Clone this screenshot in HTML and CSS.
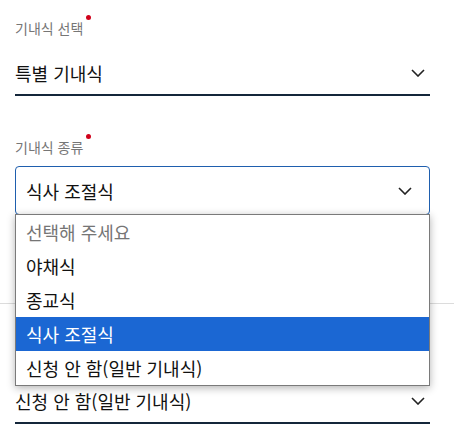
FILE: index.html
```html
<!DOCTYPE html>
<html lang="ko">
<head>
  <meta charset="UTF-8" />
  <title>기내식 신청</title>
  <link rel="stylesheet" href="styles.css">
</head>
<body>

  <div class="meal-form">
    <div class="field first">
      <div class="label">기내식 선택<span class="req"></span></div>
      <div class="select line">
        <span>특별 기내식</span>
        <svg class="chevron" width="14" height="8" viewBox="0 0 14 8"><path d="M1 1 L7 7 L13 1" /></svg>
      </div>
    </div>

    <div class="field second">
      <div class="label">기내식 종류<span class="req"></span></div>
      <div class="select box">
        <span>식사 조절식</span>
        <svg class="chevron" width="14" height="8" viewBox="0 0 14 8"><path d="M1 1 L7 7 L13 1" /></svg>
      </div>
      <ul class="options">
        <li class="placeholder">선택해 주세요</li>
        <li>야채식</li>
        <li>종교식</li>
        <li class="active">식사 조절식</li>
        <li>신청 안 함(일반 기내식)</li>
      </ul>
    </div>

    <div class="divider"></div>

    <div class="field third">
      <div class="label">유아 기내식<span class="req"></span></div>
      <div class="select line">
        <span>신청 안 함(일반 기내식)</span>
        <svg class="chevron" width="14" height="8" viewBox="0 0 14 8"><path d="M1 1 L7 7 L13 1" /></svg>
      </div>
    </div>
  </div>

</body>
</html>
```

FILE: styles.css
```css
body {
  margin: 0;
  font-family: "Noto Sans CJK KR", "Noto Sans", sans-serif;
  color: #111;
  background: #fff;
}
.meal-form {
  padding: 18px 24px 6px 15px;
}
.field {
  position: relative;
}
.second {
  margin-top: 41px;
}
.third {
  margin-top: 42px;
}
.label {
  font-size: 14px;
  line-height: 20px;
  color: #767676;
}
.req {
  display: inline-block;
  width: 5px;
  height: 5px;
  border-radius: 50%;
  background: #d0021b;
  vertical-align: top;
  margin: -3px 0 0 3px;
}
.select {
  display: flex;
  justify-content: space-between;
  align-items: center;
  font-size: 18px;
}
.line {
  margin-top: 14px;
  height: 42px;
  padding-right: 5px;
  border-bottom: 2px solid #14263a;
}
.box {
  margin-top: 9px;
  height: 46px;
  padding: 1px 17px 0 10px;
  border: 1px solid #1f5fae;
  border-radius: 4px;
}
.chevron path {
  fill: none;
  stroke: #222;
  stroke-width: 1.6;
}
.options {
  position: absolute;
  left: 0;
  right: 0;
  top: 77px;
  margin: 0;
  padding: 0;
  list-style: none;
  background: #fff;
  border: 1px solid #7a7a7a;
  box-shadow: 0 2px 8px rgba(0, 0, 0, 0.3);
  z-index: 2;
}
.options li {
  height: 34px;
  line-height: 34px;
  padding-left: 10px;
  font-size: 18px;
}
.options .placeholder {
  color: #757575;
}
.options .active {
  background: #1b67d3;
  color: #fff;
}
.divider {
  height: 1px;
  background: #dcdcdc;
  margin: 88px -24px 0 -15px;
}
```
